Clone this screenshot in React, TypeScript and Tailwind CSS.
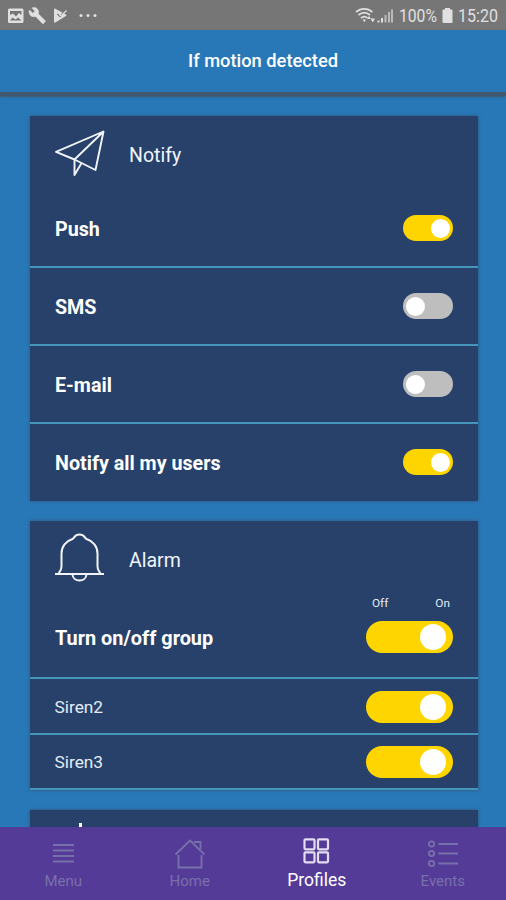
import type { ReactNode } from "react";

function StatusBar() {
  return (
    <div className="flex h-[30px] shrink-0 items-center justify-between bg-[#767676] pr-[8px] pl-[7px] text-[#e0e0e0]">
      <svg width="92" height="30" viewBox="0 0 92 30" fill="currentColor">
        <path
          fillRule="evenodd"
          d="M2.5 8.5h12.500a1.500 1.500 0 0 1 1.500 1.500v11.500a1.500 1.500 0 0 1-1.500 1.500H2.500A1.500 1.500 0 0 1 1 21.500V10a1.500 1.500 0 0 1 1.500-1.500zM3 11v4l3-1.500 3 3 3-3.500 2.500 2V11zM3 20.500h11.500l-3.500-3-2.500 2-3-2z"
        />
        <path
          d="M38.200 20.700l-6.900-6.900c.7-1.700.3-3.600-1.100-5-1.500-1.500-3.600-1.800-5.400-.9l3.200 3.200-2.200 2.200-3.200-3.200c-1 1.700-.6 3.900.9 5.300 1.400 1.400 3.400 1.800 5.100 1.100l6.800 6.900c.3.300.8.300 1.100 0l1.700-1.700c.4-.3.400-.8 0-1z"
          stroke="currentColor"
          strokeWidth=".5"
        />
        <path d="M47 9.500c0-.8.700-1.200 1.400-.8l10.500 5.800c.7.400.7 1.100 0 1.500l-10.500 6.500c-.7.400-1.400 0-1.400-.8z" />
        <path d="M50.500 14l2.500 2.500 5.500-6" fill="none" stroke="#767676" strokeWidth="1.400" />
        <path d="M52 14l2 2 5.500-5.500" fill="none" stroke="currentColor" strokeWidth="1.200" />
        <circle cx="74" cy="15.500" r="1.500" />
        <circle cx="81" cy="15.500" r="1.500" />
        <circle cx="88" cy="15.500" r="1.500" />
      </svg>
      <div className="flex items-center">
        <svg width="39" height="30" viewBox="0 0 39 30" fill="none" stroke="currentColor" strokeWidth="1.700">
          <path d="M1 12c5-4.200 11.500-4.200 16.500 0M3.500 15c3.500-3 8-3 11.500 0M6 18c2.200-1.900 4.500-1.900 6.500 0" />
          <path d="M7.500 19.500h3.500l-1.700 2.700z" fill="currentColor" stroke="none" />
          <path d="M12 19l2-3 2 3zM15.500 18.500h4.500l-2.200 4z" fill="currentColor" stroke="none" />
          <path d="M23.500 22.500v-2M27 22.500V18" strokeWidth="2" />
          <path d="M30.500 22.500V15M34 22.500V12M37 22.500V9.500" strokeWidth="2" opacity=".65" />
        </svg>
        <span className="ml-[5px] w-[38px] origin-left scale-x-[0.87] pt-px text-[18px] leading-[30px] whitespace-nowrap">100%</span>
        <svg className="ml-[5px]" width="11" height="30" viewBox="0 0 11 30" fill="currentColor">
          <path d="M3 8h5v1.500h1.500a1 1 0 0 1 1 1V22a1 1 0 0 1-1 1h-8a1 1 0 0 1-1-1V10.500a1 1 0 0 1 1-1H3z" />
        </svg>
        <span className="ml-[5px] w-[40px] origin-left scale-x-[0.89] pt-px text-[18px] leading-[30px] whitespace-nowrap">15:20</span>
      </div>
    </div>
  );
}

function SmallToggle({ on }: { on: boolean }) {
  return (
    <div className={`flex h-[26px] w-[50px] items-center rounded-full px-[3px] ${on ? "justify-end bg-[#ffd500]" : "bg-[#bebebe]"}`}>
      <div className="size-[19px] rounded-full bg-white" />
    </div>
  );
}

function LargeToggle() {
  return (
    <div className="flex h-[32px] w-[87px] items-center justify-end rounded-full bg-[#ffd500] pr-[7px]">
      <div className="size-[26px] rounded-full bg-white" />
    </div>
  );
}

function Card({ children, className }: { children: ReactNode; className: string }) {
  return <section className={`mr-[28px] ml-[30px] shrink-0 bg-[#27416a] shadow-[0_0_3px_#35506c] ${className}`}>{children}</section>;
}

function CardHeader({ icon, title }: { icon: ReactNode; title: string }) {
  return (
    <div className="flex h-[76px] items-center pl-[24px] text-[#f1f5fb]">
      {icon}
      <span className="ml-[24px] pt-[3px] text-[19.5px]">{title}</span>
    </div>
  );
}

function NotifyRow({ label, on, last = false }: { label: string; on: boolean; last?: boolean }) {
  return (
    <div className={`flex h-[78px] items-center justify-between pr-[25px] pl-[25px] ${last ? "pb-[2px]" : "border-b-2 border-[#4595b9]"}`}>
      <span className="pt-[3px] text-[19.700px] font-bold text-white">{label}</span>
      <SmallToggle on={on} />
    </div>
  );
}

function SirenRow({ label, height }: { label: string; height: string }) {
  return (
    <div className={`flex items-center justify-between border-b-2 border-[#4595b9] pr-[25px] pl-[24.500px] ${height}`}>
      <span className="pt-[3px] text-[17.300px] text-[#e4edf5]">{label}</span>
      <LargeToggle />
    </div>
  );
}

function NavItem({ icon, label, active = false }: { icon: ReactNode; label: string; active?: boolean }) {
  return (
    <div className={`flex flex-1 flex-col items-center ${active ? "text-white" : "text-[#7870aa]"}`}>
      {icon}
      <span className={active ? "-mt-px pl-px text-[17.500px] leading-[24px]" : "text-[15px] leading-[24px]"}>{label}</span>
    </div>
  );
}

export default function App() {
  return (
    <div className="flex h-[900px] w-[506px] flex-col overflow-hidden bg-[#2878b7] font-[Roboto,sans-serif]">
      <StatusBar />
      <header className="flex h-[66px] shrink-0 items-center justify-center border-b-4 border-[#43586c] pl-[20px] shadow-[0_1px_2px_#43586c]">
        <h1 className="text-[18.300px] font-medium text-white">If motion detected</h1>
      </header>

      <main className="flex min-h-0 flex-1 flex-col gap-[20px] overflow-hidden pt-[20px]">
        <Card className="h-[385px]">
          <CardHeader
            title="Notify"
            icon={
              <svg width="51" height="50" viewBox="0 0 51 50" fill="none" stroke="currentColor" strokeWidth="1.900" strokeLinejoin="round">
                <path d="M2 22.800L49.500 2.500 41.500 41 20.500 30.500zM49.500 2.500L20.500 30.500V46L27.300 34.500" />
              </svg>
            }
          />
          <div className="-mt-[2px]">
            <NotifyRow label="Push" on />
            <NotifyRow label="SMS" on={false} />
            <NotifyRow label="E-mail" on={false} />
            <NotifyRow label="Notify all my users" on last />
          </div>
        </Card>

        <Card className="h-[269px]">
          <CardHeader
            title="Alarm"
            icon={
              <svg className="overflow-visible" width="51" height="50" viewBox="0 2.500 51 50" fill="none" stroke="currentColor" strokeWidth="2">
                <path d="M1 42.500h49M4.500 41.500Q7.500 39 7.500 34V22C7.500 15 12 9.500 18.500 7.500C20.500 6.500 20.500 3 25.500 3S30.500 6.500 32.500 7.500C39 9.500 43.500 15 43.500 22V34Q43.500 39 46.500 41.500M18.500 43C19 51 32 51 32.500 43" />
              </svg>
            }
          />
          <div className="flex h-[82px] items-center justify-between border-b-2 border-[#4595b9] pr-[25px] pl-[25px]">
            <span className="pt-[3px] text-[19.900px] font-bold text-white">Turn on/off group</span>
            <div className="-mt-[27px] flex flex-col gap-[9px]">
              <div className="flex justify-between pr-[3px] pl-[6px] text-[11.800px] leading-[18px] text-[#e4edf5]">
                <span>Off</span>
                <span>On</span>
              </div>
              <LargeToggle />
            </div>
          </div>
          <SirenRow label="Siren2" height="h-[56px] pt-px" />
          <SirenRow label="Siren3" height="h-[55px]" />
        </Card>

        <Card className="h-[100px]">
          <div className="pt-[13px] pl-[49px]">
            <div className="h-[5px] w-[3px] bg-white" />
          </div>
        </Card>
      </main>

      <nav className="z-10 flex h-[73px] shrink-0 bg-[#553b98] pt-[9px]">
        <NavItem
          label="Menu"
          icon={
            <svg width="34" height="33" viewBox="0 0 34 33" stroke="currentColor" strokeWidth="2">
              <path d="M7 9h21M7 14.500h21M7 20h21M7 25.500h21" />
            </svg>
          }
        />
        <NavItem
          label="Home"
          icon={
            <svg width="34" height="33" viewBox="0 0 34 33" fill="none" stroke="currentColor" strokeWidth="1.800">
              <path d="M2.500 18.500L17 4.500 31.500 18.500M5.500 19V31.500H28.500V19M21 6h6.500v7" />
            </svg>
          }
        />
        <NavItem
          label="Profiles"
          active
          icon={
            <svg width="34" height="33" viewBox="0 0 34 33" fill="none" stroke="#e4dcf0" strokeWidth="2.200">
              <rect x="5.500" y="3.300" width="10" height="10" rx="1" />
              <rect x="19" y="3.300" width="10" height="10" rx="1" />
              <rect x="5.500" y="16.300" width="10" height="10" rx="1" />
              <rect x="19" y="16.300" width="10" height="10" rx="1" />
            </svg>
          }
        />
        <NavItem
          label="Events"
          icon={
            <svg width="34" height="33" viewBox="0 0 34 33" fill="none" stroke="currentColor" strokeWidth="1.800">
              <circle cx="5.500" cy="8" r="2.700" />
              <circle cx="5.500" cy="17.500" r="2.700" />
              <circle cx="5.500" cy="27.500" r="2.700" />
              <path d="M12.500 8h19.500M12.500 17.500h19.500M12.500 27.500h19.500" />
            </svg>
          }
        />
      </nav>
    </div>
  );
}
